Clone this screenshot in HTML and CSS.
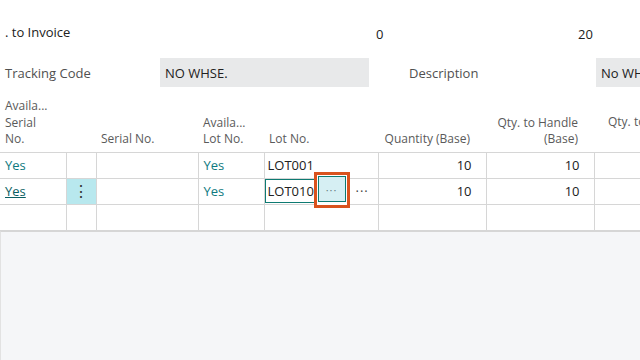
FILE: index.html
```html
<!DOCTYPE html>
<html lang="en">
<head>
  <meta charset="UTF-8" />
  <title>Item Tracking Lines</title>
  <link rel="stylesheet" href="styles.css">
</head>
<body>
  <section class="header-fields">
    <div class="field-row top-cut">
      <span class="label"></span>
      <span class="num first">-</span>
    </div>
    <div class="field-row">
      <span class="label">. to Invoice</span>
      <span class="num first">0</span>
      <span class="num second">20</span>
    </div>
    <div class="field-row tracking">
      <span class="label">Tracking Code</span>
      <span class="box code-box">NO WHSE.</span>
      <span class="label desc">Description</span>
      <span class="box desc-box">No WHSE.</span>
    </div>
  </section>

  <section class="lines">
    <table>
      <colgroup>
        <col class="c-avail">
        <col class="c-menu">
        <col class="c-serial">
        <col class="c-avail-lot">
        <col class="c-lot">
        <col class="c-qty">
        <col class="c-handle">
        <col class="c-rest">
      </colgroup>
      <thead>
        <tr>
          <th>Availa...<br>Serial<br>No.</th>
          <th></th>
          <th>Serial No.</th>
          <th>Availa...<br>Lot No.</th>
          <th>Lot No.</th>
          <th class="right">Quantity (Base)</th>
          <th class="right">Qty. to Handle<br>(Base)</th>
          <th class="cut">Qty. to Invoice</th>
        </tr>
      </thead>
      <tbody>
        <tr>
          <td class="yes">Yes</td>
          <td></td>
          <td></td>
          <td class="yes">Yes</td>
          <td class="lot">LOT001</td>
          <td class="right">10</td>
          <td class="right">10</td>
          <td></td>
        </tr>
        <tr class="current">
          <td class="yes link">Yes</td>
          <td class="row-menu">&#8942;</td>
          <td></td>
          <td class="yes">Yes</td>
          <td class="lot editing">
            <div class="edit-wrap">
              <span class="edit-box">LOT010</span>
              <span class="assist"><span class="assist-btn">&middot;&middot;&middot;</span></span>
              <span class="more">&middot;&middot;&middot;</span>
            </div>
          </td>
          <td class="right">10</td>
          <td class="right">10</td>
          <td></td>
        </tr>
        <tr>
          <td></td><td></td><td></td><td></td><td></td><td></td><td></td><td></td>
        </tr>
      </tbody>
    </table>
    <div class="empty-area"></div>
  </section>
</body>
</html>
```

FILE: styles.css
```css
* {
  box-sizing: border-box;
}

body {
  margin: 0;
  width: 640px;
  height: 360px;
  overflow: hidden;
  background: white;
  font-family: "Open Sans", "Liberation Sans", sans-serif;
  font-size: 13px;
  color: #212121;
  display: flex;
  flex-direction: column;
}

.header-fields {
  display: flex;
  flex-direction: column;
}

.field-row {
  display: flex;
  align-items: center;
  height: 29px;
}

.top-cut {
  height: 10px;
  margin-top: -7px;
}

.field-row .label {
  width: 160px;
  padding-left: 5px;
  color: #212121;
}

.field-row .num.first {
  margin-left: 216px;
  width: 10px;
}

.field-row .num.second {
  margin-left: 192px;
}

.field-row:nth-child(2) {
  margin-top: 14px;
}

.field-row:nth-child(2) .num {
  padding-top: 5px;
}

.tracking {
  margin-top: 12px;
}

.tracking .label {
  color: #505050;
}

.box {
  background: #e8e9ea;
  height: 29px;
  display: flex;
  align-items: center;
  padding-left: 5px;
}

.code-box {
  width: 209px;
}

.tracking .desc {
  margin-left: 40px;
  width: 187px;
  padding-left: 0;
}

.desc-box {
  flex: 1;
  white-space: nowrap;
  overflow: hidden;
}

.lines {
  margin-top: 8px;
  flex: 1;
  display: flex;
  flex-direction: column;
}

table {
  border-collapse: collapse;
  table-layout: fixed;
  width: 660px;
}

.c-avail { width: 66px; }
.c-menu { width: 30px; }
.c-serial { width: 102px; }
.c-avail-lot { width: 66px; }
.c-lot { width: 114px; }
.c-qty { width: 108px; }
.c-handle { width: 108px; }
.c-rest { width: 66px; }

th {
  font-weight: normal;
  color: #5a5a5a;
  font-size: 12px;
  line-height: 16.5px;
  text-align: left;
  vertical-align: bottom;
  padding: 0 8px 4px 5px;
  height: 57px;
  white-space: nowrap;
  overflow: hidden;
}

th.right {
  text-align: right;
  padding-right: 16px;
}

th.cut {
  padding-left: 14px;
  vertical-align: top;
  padding-top: 19px;
}

td {
  height: 26px;
  padding: 0 8px 0 5px;
  border: 1px solid #d6d6d6;
  white-space: nowrap;
  overflow: hidden;
}

td:first-child {
  border-left: none;
}

td.right {
  text-align: right;
  padding-right: 14px;
}

td.yes {
  color: #0e7a80;
}

td.link {
  text-decoration: underline;
  color: #0b5f63;
}

td.lot {
  padding-left: 3px;
}

td.row-menu {
  background: #b8e8ee;
  text-align: center;
  padding: 0;
  font-size: 16px;
  color: #333;
}

td.editing {
  padding: 0;
  overflow: visible;
  position: relative;
  z-index: 1;
}

.edit-wrap {
  display: flex;
  align-items: center;
  height: 24px;
}

.edit-box {
  border: 1px solid #0e7a72;
  border-right: none;
  height: 24px;
  width: 50px;
  padding-left: 2px;
  display: flex;
  align-items: center;
}

.assist {
  border: 3px solid #d9531e;
  width: 36px;
  height: 36px;
  flex-shrink: 0;
  margin-left: -1px;
  margin-top: -2px;
  display: flex;
  background: white;
}

.assist-btn {
  flex: 1;
  margin: 1px 1px 3px 1px;
  background: #d6eff3;
  border: 1px solid #0e7a72;
  color: #6a7d80;
  font-size: 11px;
  display: flex;
  align-items: center;
  justify-content: center;
  letter-spacing: 1px;
}

.more {
  margin-left: 6px;
  color: #444;
  letter-spacing: 1px;
}

.empty-area {
  flex: 1;
  background: #f5f6f8;
  border-top: 1px solid #d6d6d6;
  border-left: 1px solid #e2e2e2;
}
```
